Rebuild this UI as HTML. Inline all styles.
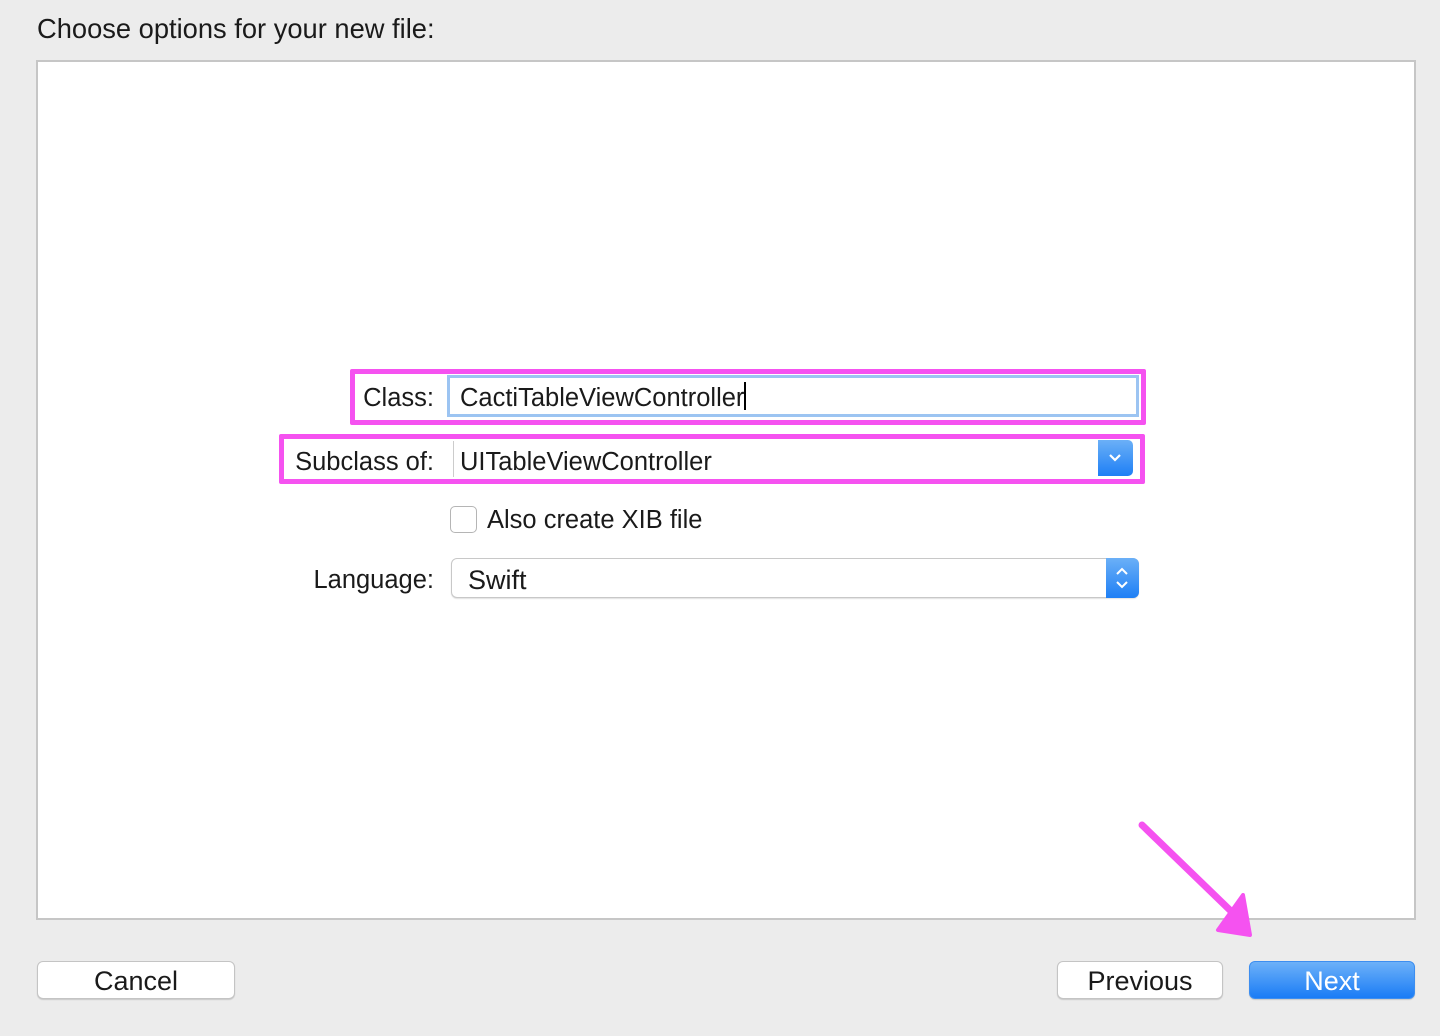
<!DOCTYPE html>
<html><head><meta charset="utf-8"><style>
body{margin:0;width:1440px;height:1036px;background:#ececec;font-family:"Liberation Sans",sans-serif;position:relative;overflow:hidden;color:#1a1a1a}
.a{position:absolute;white-space:nowrap}
.lbl{font-size:25.5px;text-align:right}
.btn{position:absolute;height:38px;border-radius:6px;background:#fff;border:1px solid #c4c4c4;box-shadow:0 1px 1px rgba(0,0,0,.15);font-size:27px;text-align:center;line-height:38px;box-sizing:border-box}
.pink{position:absolute;border:5px solid #f552f0;border-radius:2px;box-sizing:border-box}
</style></head><body>
<div class="a" style="left:37px;top:13px;font-size:27.3px">Choose options for your new file:</div>
<div class="a" style="left:36px;top:60px;width:1380px;height:860px;background:#fff;border:2px solid #c6c6c6;box-sizing:border-box"></div>

<div class="a lbl" style="left:280px;width:154px;top:384px">Class:</div>
<div class="a" style="left:447px;top:375px;width:692px;height:42px;border:3px solid #9cc4f2;box-sizing:border-box;background:#fff"></div>
<div class="a" style="left:460px;top:384px;font-size:25.5px">CactiTableViewController</div>
<div class="a" style="left:744px;top:382px;width:2px;height:28px;background:#000"></div>

<div class="a lbl" style="left:270px;width:164px;top:448px">Subclass of:</div>
<div class="a" style="left:453px;top:441px;width:1px;height:36px;background:#ccc"></div>
<div class="a" style="left:460px;top:448px;font-size:25.5px">UITableViewController</div>
<div class="a" style="left:1098px;top:440px;width:35px;height:36px;border-radius:0 5px 5px 0;background:linear-gradient(#6bb0f7,#1e7ff5)"></div>
<svg class="a" style="left:1106px;top:450px" width="18" height="16"><path d="M4 5 L9 10 L14 5" stroke="#fff" stroke-width="2.2" fill="none"/></svg>

<div class="pink" style="left:350px;top:369px;width:796px;height:56px"></div>
<div class="pink" style="left:279px;top:434px;width:866px;height:50px"></div>

<div class="a" style="left:450px;top:506px;width:27px;height:27px;border:1px solid #b5b5b5;border-radius:5px;background:#fff;box-sizing:border-box"></div>
<div class="a" style="left:487px;top:506px;font-size:25.5px">Also create XIB file</div>

<div class="a lbl" style="left:270px;width:164px;top:566px">Language:</div>
<div class="a" style="left:451px;top:558px;width:688px;height:40px;border:1px solid #c8c8c8;border-radius:6px;background:#fff;box-sizing:border-box;box-shadow:0 1px 1px rgba(0,0,0,.12)"></div>
<div class="a" style="left:468px;top:565px;font-size:27px">Swift</div>
<div class="a" style="left:1106px;top:558px;width:33px;height:40px;border-radius:0 6px 6px 0;background:linear-gradient(#6bb0f7,#1e7ff5)"></div>
<svg class="a" style="left:1112px;top:562px" width="20" height="32"><path d="M5 12 L10 7 L15 12 M5 20 L10 25 L15 20" stroke="#fff" stroke-width="2" fill="none"/></svg>

<svg class="a" style="left:1130px;top:815px" width="130" height="130"><path d="M12 10 L105 100" stroke="#f552f0" stroke-width="7" stroke-linecap="round"/><path d="M88 115 L120 120 L113 80 Z" fill="#f552f0" stroke="#f552f0" stroke-width="4" stroke-linejoin="round"/></svg>

<div class="btn" style="left:37px;top:961px;width:198px">Cancel</div>
<div class="btn" style="left:1057px;top:961px;width:166px">Previous</div>
<div class="btn" style="left:1249px;top:961px;width:166px;background:linear-gradient(#6db1f8,#1a7cf6);border-color:#3d8ef0;color:#fff">Next</div>
</body></html>
